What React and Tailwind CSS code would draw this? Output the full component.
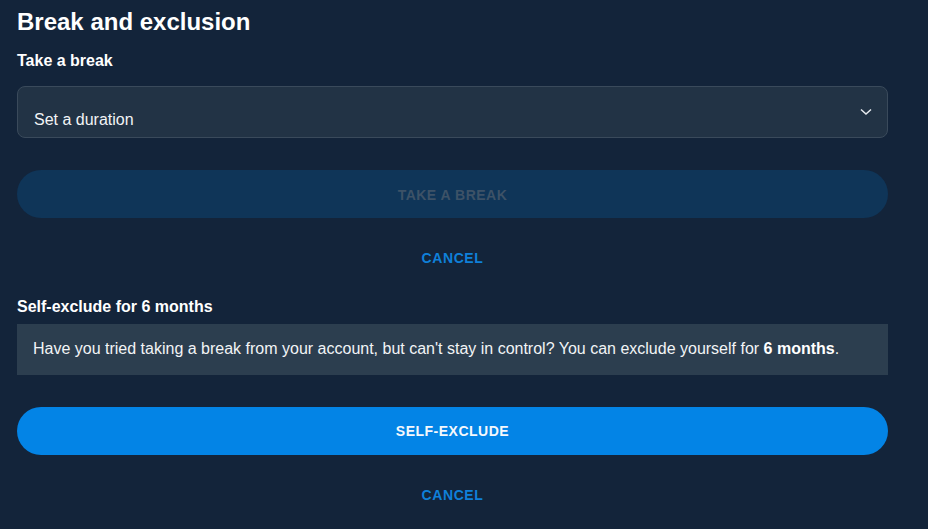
export default function App() {
  return (
    <div
      className="min-h-[529px] w-full bg-[#13243a] px-[17px] pt-[8px] pr-[40px] text-white"
      style={{ fontFamily: '"Liberation Sans", Arial, sans-serif' }}
    >
      <h1 className="text-[24px] font-bold leading-[28px]">Break and exclusion</h1>
      <div className="mt-[15px] text-[16px] font-bold leading-[20px]">Take a break</div>
      <div className="mt-[15px] flex h-[52px] items-start justify-between rounded-[8px] border border-[#3a4a5b] bg-[#223345] pl-[16px] pr-[15px]">
        <span className="pt-[23px] text-[16px] leading-[20px] text-[#f2f4f6]">Set a duration</span>
        <svg className="mt-[21px]" width="12" height="8" viewBox="0 0 12 8" fill="none">
          <path d="M1 1.5L6 6L11 1.5" stroke="#e8ecf0" strokeWidth="1.5" />
        </svg>
      </div>
      <button className="mt-[32px] flex h-[48px] w-full items-center justify-center rounded-full bg-[#0f3558] pt-[2px] text-[14px] font-bold tracking-[0.5px] text-[#3d5267]">
        TAKE A BREAK
      </button>
      <button className="mt-[16px] flex h-[48px] w-full items-center justify-center text-[14px] font-bold tracking-[0.6px] text-[#0f80d9]">
        CANCEL
      </button>
      <div className="mt-[15px] text-[16px] font-bold leading-[20px]">Self-exclude for 6 months</div>
      <div className="mt-[7px] flex h-[51px] items-center bg-[#2c3e4f] px-[16px] pb-[1px] text-[16px] leading-[20px] text-[#f2f4f6]">
        <span>
          Have you tried taking a break from your account, but can't stay in control? You can exclude yourself for{" "}
          <b className="text-white">6 months</b>.
        </span>
      </div>
      <button className="mt-[32px] flex h-[48px] w-full items-center justify-center rounded-full bg-[#0384e6] pt-[1px] text-[14px] font-bold tracking-[0.5px] text-[#f4f8fc]">
        SELF-EXCLUDE
      </button>
      <button className="mt-[16px] flex h-[48px] w-full items-center justify-center text-[14px] font-bold tracking-[0.6px] text-[#0f80d9]">
        CANCEL
      </button>
    </div>
  );
}
